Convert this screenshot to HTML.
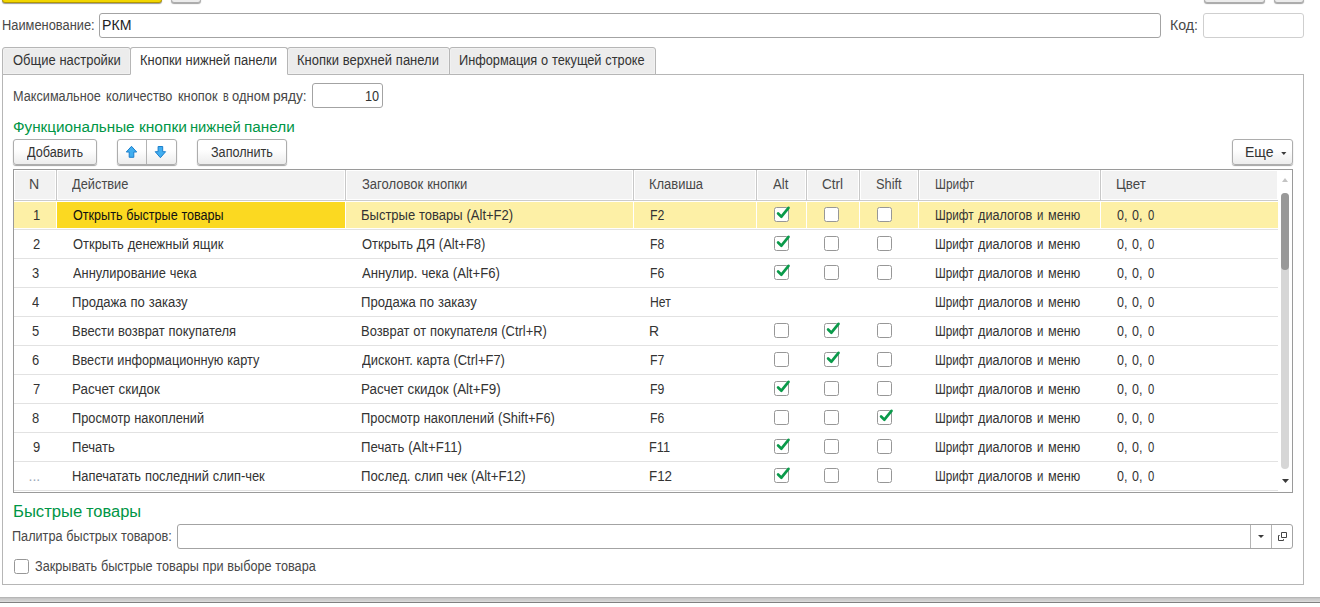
<!DOCTYPE html>
<html lang="ru"><head><meta charset="utf-8"><title>РКМ</title>
<style>
*{box-sizing:border-box;margin:0;padding:0}
html,body{width:1320px;height:607px;overflow:hidden;background:#fff}
body{position:relative;font-family:"Liberation Sans",Arial,sans-serif;font-size:14px;color:#333}
.a{position:absolute}
.t{position:absolute;z-index:3;white-space:nowrap;transform-origin:0 0;display:block}
.inp{position:absolute;border:1px solid #a3a3a3;border-radius:3px;background:#fff}
.btn{position:absolute;border:1px solid #adadad;border-radius:3px;background:linear-gradient(#fff 40%,#ececec);box-shadow:0 1px 1px rgba(0,0,0,.36)}
.tab{position:absolute;top:47px;height:28px;border:1px solid #b6b6b6;background:#ececec;box-shadow:inset 0 0 0 1px #f1f1f1;border-radius:3px 3px 0 0}
.tab.act{background:#fff;box-shadow:none;border-bottom:1px solid #fff;z-index:2}
.panel{position:absolute;left:2px;top:74px;width:1302px;height:511px;border:1px solid #b6b6b6;background:#fff}
.tbl{position:absolute;left:13px;top:169px;width:1280px;height:324px;border:1px solid #9a9a9a;background:#fff}
.hc{position:absolute;top:171px;height:28px;background:#f2f2f2}
.hs{position:absolute;z-index:1;top:170px;height:31px;width:1px;background:#c8c8c8}
.rl{position:absolute;left:14px;width:1264px;height:1px;background:#e2e2e2}
.cb{position:absolute;width:15px;height:15px;border:1px solid #979797;border-radius:2.5px;background:#fff;display:block}
.ck{position:absolute;left:-1px;top:-3px;overflow:visible}
.ss{position:absolute;top:202px;height:26px;width:1px;background:#fff}
</style></head><body>
<!-- top cut-off buttons -->
<div class="a" style="left:2px;top:-20px;width:160px;height:23px;background:#f2d600;border:1px solid #b39800;border-radius:3px;box-shadow:0 1px 1px rgba(0,0,0,.4)"></div>
<div class="btn" style="left:171px;top:-20px;width:30px;height:23px;background:#ececec"></div>
<div class="btn" style="left:1204px;top:-20px;width:61px;height:23px;background:#ececec"></div>
<div class="btn" style="left:1274px;top:-20px;width:30px;height:23px;background:#ececec"></div>

<div class="inp" style="left:99px;top:13px;width:1062px;height:25px"></div>
<div class="inp" style="left:1203px;top:13px;width:101px;height:25px;border-color:#cfcfcf"></div>

<div class="panel"></div>
<div class="tab" style="left:2px;width:129px"></div>
<div class="tab" style="left:287px;width:163px"></div>
<div class="tab" style="left:449px;width:207px"></div>
<div class="tab act" style="left:130px;width:158px"></div>

<div class="inp" style="left:312px;top:83px;width:71px;height:25px"></div>

<div class="btn" style="left:13px;top:139px;width:84px;height:26px"></div>
<div class="btn" style="left:117px;top:139px;width:60px;height:26px">
<div class="a" style="left:28px;top:0;width:1px;height:24px;background:#b3b3b3"></div>
<svg class="a" style="left:6px;top:5px" width="14" height="14" viewBox="0 0 14 14"><path d="M7.5 1.3 L12.7 7 H9.8 V12.3 H5.2 V7 H2.3 Z" fill="#41aef0" stroke="#1c7fcc" stroke-width="1" stroke-linejoin="miter"/></svg>
<svg class="a" style="left:35px;top:5px" width="14" height="14" viewBox="0 0 14 14"><path d="M7.4 12.7 L12.6 6.7 H9.7 V1.5 H5.1 V6.7 H2.2 Z" fill="#41aef0" stroke="#1c7fcc" stroke-width="1" stroke-linejoin="miter"/></svg>
</div>
<div class="btn" style="left:197px;top:139px;width:90px;height:26px"></div>
<div class="btn" style="left:1232px;top:139px;width:61px;height:26px"><svg class="a" style="left:48px;top:12px" width="6" height="3" viewBox="0 0 6 3"><path d="M0.2 0H5.4L2.8 2.9Z" fill="#3a3a3a"/></svg></div>

<div class="tbl"></div>
<!-- header cells -->
<div class="hc" style="left:15px;width:40px"></div>
<div class="hc" style="left:58px;width:286px"></div>
<div class="hc" style="left:347px;width:285px"></div>
<div class="hc" style="left:635px;width:120px"></div>
<div class="hc" style="left:758px;width:47px"></div>
<div class="hc" style="left:808px;width:50px"></div>
<div class="hc" style="left:861px;width:56px"></div>
<div class="hc" style="left:920px;width:179px"></div>
<div class="hc" style="left:1102px;width:175px"></div>
<div class="hs" style="left:56px"></div><div class="hs" style="left:345px"></div><div class="hs" style="left:633px"></div><div class="hs" style="left:756px"></div><div class="hs" style="left:806px"></div><div class="hs" style="left:859px"></div><div class="hs" style="left:918px"></div><div class="hs" style="left:1100px"></div>
<div class="a" style="left:14px;top:200px;width:1264px;height:1px;background:#cbcbcb"></div>
<!-- selected row -->
<div class="a" style="left:14px;top:202px;width:1264px;height:26px;background:#fdf0a6"></div>
<div class="a" style="left:57px;top:202px;width:288px;height:26px;background:#fbd921"></div>
<div class="ss" style="left:56px"></div><div class="ss" style="left:345px"></div><div class="ss" style="left:633px"></div><div class="ss" style="left:756px"></div><div class="ss" style="left:806px"></div><div class="ss" style="left:859px"></div><div class="ss" style="left:918px"></div><div class="ss" style="left:1100px"></div>
<div class="rl" style="top:229px"></div>
<div class="rl" style="top:258px"></div>
<div class="rl" style="top:287px"></div>
<div class="rl" style="top:316px"></div>
<div class="rl" style="top:345px"></div>
<div class="rl" style="top:374px"></div>
<div class="rl" style="top:403px"></div>
<div class="rl" style="top:432px"></div>
<div class="rl" style="top:461px"></div>
<div class="rl" style="top:490px"></div>
<span class="cb" style="left:774px;top:207px"><svg class="ck" viewBox="0 0 18 18" width="18" height="18"><path d="M4.1 8.5 L7.4 11.7 L14.5 2.9" fill="none" stroke="#0a9a4a" stroke-width="2.7" stroke-linecap="round" stroke-linejoin="round"/></svg></span>
<span class="cb" style="left:824px;top:207px"></span>
<span class="cb" style="left:877px;top:207px"></span>
<span class="cb" style="left:774px;top:236px"><svg class="ck" viewBox="0 0 18 18" width="18" height="18"><path d="M4.1 8.5 L7.4 11.7 L14.5 2.9" fill="none" stroke="#0a9a4a" stroke-width="2.7" stroke-linecap="round" stroke-linejoin="round"/></svg></span>
<span class="cb" style="left:824px;top:236px"></span>
<span class="cb" style="left:877px;top:236px"></span>
<span class="cb" style="left:774px;top:265px"><svg class="ck" viewBox="0 0 18 18" width="18" height="18"><path d="M4.1 8.5 L7.4 11.7 L14.5 2.9" fill="none" stroke="#0a9a4a" stroke-width="2.7" stroke-linecap="round" stroke-linejoin="round"/></svg></span>
<span class="cb" style="left:824px;top:265px"></span>
<span class="cb" style="left:877px;top:265px"></span>
<span class="cb" style="left:774px;top:323px"></span>
<span class="cb" style="left:824px;top:323px"><svg class="ck" viewBox="0 0 18 18" width="18" height="18"><path d="M4.1 8.5 L7.4 11.7 L14.5 2.9" fill="none" stroke="#0a9a4a" stroke-width="2.7" stroke-linecap="round" stroke-linejoin="round"/></svg></span>
<span class="cb" style="left:877px;top:323px"></span>
<span class="cb" style="left:774px;top:352px"></span>
<span class="cb" style="left:824px;top:352px"><svg class="ck" viewBox="0 0 18 18" width="18" height="18"><path d="M4.1 8.5 L7.4 11.7 L14.5 2.9" fill="none" stroke="#0a9a4a" stroke-width="2.7" stroke-linecap="round" stroke-linejoin="round"/></svg></span>
<span class="cb" style="left:877px;top:352px"></span>
<span class="cb" style="left:774px;top:381px"><svg class="ck" viewBox="0 0 18 18" width="18" height="18"><path d="M4.1 8.5 L7.4 11.7 L14.5 2.9" fill="none" stroke="#0a9a4a" stroke-width="2.7" stroke-linecap="round" stroke-linejoin="round"/></svg></span>
<span class="cb" style="left:824px;top:381px"></span>
<span class="cb" style="left:877px;top:381px"></span>
<span class="cb" style="left:774px;top:410px"></span>
<span class="cb" style="left:824px;top:410px"></span>
<span class="cb" style="left:877px;top:410px"><svg class="ck" viewBox="0 0 18 18" width="18" height="18"><path d="M4.1 8.5 L7.4 11.7 L14.5 2.9" fill="none" stroke="#0a9a4a" stroke-width="2.7" stroke-linecap="round" stroke-linejoin="round"/></svg></span>
<span class="cb" style="left:774px;top:439px"><svg class="ck" viewBox="0 0 18 18" width="18" height="18"><path d="M4.1 8.5 L7.4 11.7 L14.5 2.9" fill="none" stroke="#0a9a4a" stroke-width="2.7" stroke-linecap="round" stroke-linejoin="round"/></svg></span>
<span class="cb" style="left:824px;top:439px"></span>
<span class="cb" style="left:877px;top:439px"></span>
<span class="cb" style="left:774px;top:468px"><svg class="ck" viewBox="0 0 18 18" width="18" height="18"><path d="M4.1 8.5 L7.4 11.7 L14.5 2.9" fill="none" stroke="#0a9a4a" stroke-width="2.7" stroke-linecap="round" stroke-linejoin="round"/></svg></span>
<span class="cb" style="left:824px;top:468px"></span>
<span class="cb" style="left:877px;top:468px"></span>
<!-- scrollbar -->
<svg class="a" style="left:1282px;top:178px" width="6" height="4" viewBox="0 0 6 4"><path d="M0 4H6L3 0Z" fill="#c4c4c4"/></svg>
<div class="a" style="left:1281px;top:193px;width:8px;height:276px;border-radius:4px;background:#d6d6d6"></div>
<div class="a" style="left:1281px;top:193px;width:8px;height:77px;border-radius:4px;background:#999"></div>
<svg class="a" style="left:1282px;top:479px" width="7" height="4" viewBox="0 0 7 4"><path d="M0 0H7L3.5 4Z" fill="#3a3a3a"/></svg>

<div class="inp" style="left:177px;top:524px;width:1116px;height:25px"></div>
<div class="a" style="left:1250px;top:525px;width:1px;height:23px;background:#b4b4b4"></div>
<div class="a" style="left:1271px;top:525px;width:1px;height:23px;background:#b4b4b4"></div>
<svg class="a" style="left:1258px;top:535px" width="6" height="3" viewBox="0 0 6 3"><path d="M0 0H6L3 3Z" fill="#3a3a3a"/></svg>
<svg class="a" style="left:1277px;top:531px" width="11" height="11" viewBox="0 0 11 11"><path d="M4.5 1.5H9.5V6.5H4.5Z M2.7 4.5H1.5V9.5H6.5V8.2" fill="none" stroke="#444" stroke-width="1"/></svg>
<span class="cb" style="left:14px;top:559px"></span>

<span class="t" style="left:1.57px;top:16.90px;font-size:14px;line-height:16px;color:#484848;transform:scaleX(0.9179)">Наименование:</span>
<span class="t" style="left:102.27px;top:17.00px;font-size:14px;line-height:16px;color:#222;transform:scaleX(1.0082)">РКМ</span>
<span class="t" style="left:1170.27px;top:17.00px;font-size:14px;line-height:16px;color:#484848;transform:scaleX(1.0131)">Код:</span>
<span class="t" style="left:12.67px;top:52.00px;font-size:14px;line-height:16px;color:#333;word-spacing:0.25px;transform:scaleX(0.9252)">Общие настройки</span>
<span class="t" style="left:140.46px;top:52.00px;font-size:14px;line-height:16px;color:#333;word-spacing:0.25px;transform:scaleX(0.9245)">Кнопки нижней панели</span>
<span class="t" style="left:297.26px;top:52.00px;font-size:14px;line-height:16px;color:#333;word-spacing:0.25px;transform:scaleX(0.9280)">Кнопки верхней панели</span>
<span class="t" style="left:459.28px;top:52.00px;font-size:14px;line-height:16px;color:#333;word-spacing:0.25px;transform:scaleX(0.9131)">Информация о текущей строке</span>
<span class="t" style="left:13.24px;top:87.75px;font-size:14px;line-height:16px;color:#484848;transform:scaleX(0.9061)">Максимальное</span>
<span class="t" style="left:106.03px;top:87.75px;font-size:14px;line-height:16px;color:#484848;transform:scaleX(0.9050)">количество</span>
<span class="t" style="left:177.62px;top:87.75px;font-size:14px;line-height:16px;color:#484848;transform:scaleX(0.9153)">кнопок</span>
<span class="t" style="left:222.50px;top:87.75px;font-size:14px;line-height:16px;color:#484848;transform:scaleX(0.7653)">в</span>
<span class="t" style="left:231.93px;top:87.75px;font-size:14px;line-height:16px;color:#484848;transform:scaleX(0.9269)">одном</span>
<span class="t" style="left:273.36px;top:87.75px;font-size:14px;line-height:16px;color:#484848;transform:scaleX(0.9825)">ряду:</span>
<span class="t" style="left:365.35px;top:87.75px;font-size:14px;line-height:16px;color:#333;transform:scaleX(0.9071)">10</span>
<span class="t" style="left:13.41px;top:117.50px;font-size:15.5px;line-height:17.5px;color:#009646;transform:scaleX(0.9831)">Функциональные</span>
<span class="t" style="left:138.64px;top:117.50px;font-size:15.5px;line-height:17.5px;color:#009646;transform:scaleX(1.0016)">кнопки</span>
<span class="t" style="left:189.82px;top:117.50px;font-size:15.5px;line-height:17.5px;color:#009646;transform:scaleX(0.9492)">нижней</span>
<span class="t" style="left:244.28px;top:117.50px;font-size:15.5px;line-height:17.5px;color:#009646;transform:scaleX(0.9876)">панели</span>
<span class="t" style="left:26.94px;top:144.00px;font-size:14px;line-height:16px;color:#333;transform:scaleX(0.9061)">Добавить</span>
<span class="t" style="left:211.06px;top:144.00px;font-size:14px;line-height:16px;color:#333;transform:scaleX(0.9012)">Заполнить</span>
<span class="t" style="left:1245.28px;top:144.00px;font-size:14px;line-height:16px;color:#333;transform:scaleX(1.0022)">Еще</span>
<span class="t" style="left:29.47px;top:176.00px;font-size:14px;line-height:16px;color:#484848;transform:scaleX(1.0077)">N</span>
<span class="t" style="left:72.44px;top:176.00px;font-size:14px;line-height:16px;color:#484848;transform:scaleX(0.9165)">Действие</span>
<span class="t" style="left:362.24px;top:176.00px;font-size:14px;line-height:16px;color:#484848;word-spacing:0.25px;transform:scaleX(0.9311)">Заголовок кнопки</span>
<span class="t" style="left:649.46px;top:176.00px;font-size:14px;line-height:16px;color:#484848;transform:scaleX(0.9256)">Клавиша</span>
<span class="t" style="left:773.00px;top:176.00px;font-size:14px;line-height:16px;color:#484848;transform:scaleX(0.9390)">Alt</span>
<span class="t" style="left:822.32px;top:176.00px;font-size:14px;line-height:16px;color:#484848;transform:scaleX(0.9673)">Ctrl</span>
<span class="t" style="left:875.67px;top:176.00px;font-size:14px;line-height:16px;color:#484848;transform:scaleX(0.9158)">Shift</span>
<span class="t" style="left:934.55px;top:176.00px;font-size:14px;line-height:16px;color:#484848;transform:scaleX(0.8486)">Шрифт</span>
<span class="t" style="left:1116.44px;top:176.00px;font-size:14px;line-height:16px;color:#484848;transform:scaleX(0.9491)">Цвет</span>
<span class="t" style="left:32.50px;top:207.00px;font-size:14px;line-height:16px;color:#333;transform:scaleX(0.9250)">1</span>
<span class="t" style="left:72.68px;top:207.00px;font-size:14px;line-height:16px;color:#111;word-spacing:0.25px;transform:scaleX(0.9003)">Открыть быстрые товары</span>
<span class="t" style="left:361.21px;top:207.00px;font-size:14px;line-height:16px;color:#333;word-spacing:0.25px;transform:scaleX(0.9291)">Быстрые товары (Alt+F2)</span>
<span class="t" style="left:649.51px;top:207.00px;font-size:14px;line-height:16px;color:#333;transform:scaleX(0.8799)">F2</span>
<span class="t" style="left:935.01px;top:207.00px;font-size:14px;line-height:16px;color:#333;transform:scaleX(0.8374)">Шрифт</span>
<span class="t" style="left:978.02px;top:207.00px;font-size:14px;line-height:16px;color:#333;transform:scaleX(0.9051)">диалогов</span>
<span class="t" style="left:1036.85px;top:207.00px;font-size:14px;line-height:16px;color:#333;transform:scaleX(0.8163)">и</span>
<span class="t" style="left:1048.06px;top:207.00px;font-size:14px;line-height:16px;color:#333;transform:scaleX(0.9064)">меню</span>
<span class="t" style="left:1117.35px;top:207.00px;font-size:14px;line-height:16px;color:#333;transform:scaleX(0.8916)">0,</span>
<span class="t" style="left:1132.45px;top:207.00px;font-size:14px;line-height:16px;color:#333;transform:scaleX(0.8916)">0,</span>
<span class="t" style="left:1147.60px;top:207.00px;font-size:14px;line-height:16px;color:#333;transform:scaleX(0.8036)">0</span>
<span class="t" style="left:32.56px;top:236.00px;font-size:14px;line-height:16px;color:#333;transform:scaleX(0.9250)">2</span>
<span class="t" style="left:72.67px;top:236.00px;font-size:14px;line-height:16px;color:#333;word-spacing:0.25px;transform:scaleX(0.9244)">Открыть денежный ящик</span>
<span class="t" style="left:361.67px;top:236.00px;font-size:14px;line-height:16px;color:#333;word-spacing:0.25px;transform:scaleX(0.9275)">Открыть ДЯ (Alt+F8)</span>
<span class="t" style="left:649.52px;top:236.00px;font-size:14px;line-height:16px;color:#333;transform:scaleX(0.8715)">F8</span>
<span class="t" style="left:935.01px;top:236.00px;font-size:14px;line-height:16px;color:#333;transform:scaleX(0.8374)">Шрифт</span>
<span class="t" style="left:978.02px;top:236.00px;font-size:14px;line-height:16px;color:#333;transform:scaleX(0.9051)">диалогов</span>
<span class="t" style="left:1036.85px;top:236.00px;font-size:14px;line-height:16px;color:#333;transform:scaleX(0.8163)">и</span>
<span class="t" style="left:1048.06px;top:236.00px;font-size:14px;line-height:16px;color:#333;transform:scaleX(0.9064)">меню</span>
<span class="t" style="left:1117.35px;top:236.00px;font-size:14px;line-height:16px;color:#333;transform:scaleX(0.8916)">0,</span>
<span class="t" style="left:1132.45px;top:236.00px;font-size:14px;line-height:16px;color:#333;transform:scaleX(0.8916)">0,</span>
<span class="t" style="left:1147.60px;top:236.00px;font-size:14px;line-height:16px;color:#333;transform:scaleX(0.8036)">0</span>
<span class="t" style="left:32.43px;top:265.00px;font-size:14px;line-height:16px;color:#333;transform:scaleX(0.9250)">3</span>
<span class="t" style="left:73.25px;top:265.00px;font-size:14px;line-height:16px;color:#333;word-spacing:0.25px;transform:scaleX(0.9158)">Аннулирование чека</span>
<span class="t" style="left:362.25px;top:265.00px;font-size:14px;line-height:16px;color:#333;word-spacing:0.25px;transform:scaleX(0.9382)">Аннулир. чека (Alt+F6)</span>
<span class="t" style="left:649.52px;top:265.00px;font-size:14px;line-height:16px;color:#333;transform:scaleX(0.8715)">F6</span>
<span class="t" style="left:935.01px;top:265.00px;font-size:14px;line-height:16px;color:#333;transform:scaleX(0.8374)">Шрифт</span>
<span class="t" style="left:978.02px;top:265.00px;font-size:14px;line-height:16px;color:#333;transform:scaleX(0.9051)">диалогов</span>
<span class="t" style="left:1036.85px;top:265.00px;font-size:14px;line-height:16px;color:#333;transform:scaleX(0.8163)">и</span>
<span class="t" style="left:1048.06px;top:265.00px;font-size:14px;line-height:16px;color:#333;transform:scaleX(0.9064)">меню</span>
<span class="t" style="left:1117.35px;top:265.00px;font-size:14px;line-height:16px;color:#333;transform:scaleX(0.8916)">0,</span>
<span class="t" style="left:1132.45px;top:265.00px;font-size:14px;line-height:16px;color:#333;transform:scaleX(0.8916)">0,</span>
<span class="t" style="left:1147.60px;top:265.00px;font-size:14px;line-height:16px;color:#333;transform:scaleX(0.8036)">0</span>
<span class="t" style="left:32.30px;top:294.00px;font-size:14px;line-height:16px;color:#333;transform:scaleX(0.9250)">4</span>
<span class="t" style="left:72.20px;top:294.00px;font-size:14px;line-height:16px;color:#333;word-spacing:0.25px;transform:scaleX(0.9346)">Продажа по заказу</span>
<span class="t" style="left:361.20px;top:294.00px;font-size:14px;line-height:16px;color:#333;word-spacing:0.25px;transform:scaleX(0.9367)">Продажа по заказу</span>
<span class="t" style="left:649.53px;top:294.00px;font-size:14px;line-height:16px;color:#333;transform:scaleX(0.8678)">Нет</span>
<span class="t" style="left:935.01px;top:294.00px;font-size:14px;line-height:16px;color:#333;transform:scaleX(0.8374)">Шрифт</span>
<span class="t" style="left:978.02px;top:294.00px;font-size:14px;line-height:16px;color:#333;transform:scaleX(0.9051)">диалогов</span>
<span class="t" style="left:1036.85px;top:294.00px;font-size:14px;line-height:16px;color:#333;transform:scaleX(0.8163)">и</span>
<span class="t" style="left:1048.06px;top:294.00px;font-size:14px;line-height:16px;color:#333;transform:scaleX(0.9064)">меню</span>
<span class="t" style="left:1117.35px;top:294.00px;font-size:14px;line-height:16px;color:#333;transform:scaleX(0.8916)">0,</span>
<span class="t" style="left:1132.45px;top:294.00px;font-size:14px;line-height:16px;color:#333;transform:scaleX(0.8916)">0,</span>
<span class="t" style="left:1147.60px;top:294.00px;font-size:14px;line-height:16px;color:#333;transform:scaleX(0.8036)">0</span>
<span class="t" style="left:32.43px;top:323.00px;font-size:14px;line-height:16px;color:#333;transform:scaleX(0.9250)">5</span>
<span class="t" style="left:72.21px;top:323.00px;font-size:14px;line-height:16px;color:#333;word-spacing:0.25px;transform:scaleX(0.9252)">Ввести возврат покупателя</span>
<span class="t" style="left:361.22px;top:323.00px;font-size:14px;line-height:16px;color:#333;word-spacing:0.25px;transform:scaleX(0.9237)">Возврат от покупателя (Ctrl+R)</span>
<span class="t" style="left:649.39px;top:323.00px;font-size:14px;line-height:16px;color:#333;transform:scaleX(0.9904)">R</span>
<span class="t" style="left:935.01px;top:323.00px;font-size:14px;line-height:16px;color:#333;transform:scaleX(0.8374)">Шрифт</span>
<span class="t" style="left:978.02px;top:323.00px;font-size:14px;line-height:16px;color:#333;transform:scaleX(0.9051)">диалогов</span>
<span class="t" style="left:1036.85px;top:323.00px;font-size:14px;line-height:16px;color:#333;transform:scaleX(0.8163)">и</span>
<span class="t" style="left:1048.06px;top:323.00px;font-size:14px;line-height:16px;color:#333;transform:scaleX(0.9064)">меню</span>
<span class="t" style="left:1117.35px;top:323.00px;font-size:14px;line-height:16px;color:#333;transform:scaleX(0.8916)">0,</span>
<span class="t" style="left:1132.45px;top:323.00px;font-size:14px;line-height:16px;color:#333;transform:scaleX(0.8916)">0,</span>
<span class="t" style="left:1147.60px;top:323.00px;font-size:14px;line-height:16px;color:#333;transform:scaleX(0.8036)">0</span>
<span class="t" style="left:32.43px;top:352.00px;font-size:14px;line-height:16px;color:#333;transform:scaleX(0.9250)">6</span>
<span class="t" style="left:72.23px;top:352.00px;font-size:14px;line-height:16px;color:#333;word-spacing:0.25px;transform:scaleX(0.9099)">Ввести информационную карту</span>
<span class="t" style="left:362.19px;top:352.00px;font-size:14px;line-height:16px;color:#333;word-spacing:0.25px;transform:scaleX(0.9250)">Дисконт. карта (Ctrl+F7)</span>
<span class="t" style="left:649.51px;top:352.00px;font-size:14px;line-height:16px;color:#333;transform:scaleX(0.8799)">F7</span>
<span class="t" style="left:935.01px;top:352.00px;font-size:14px;line-height:16px;color:#333;transform:scaleX(0.8374)">Шрифт</span>
<span class="t" style="left:978.02px;top:352.00px;font-size:14px;line-height:16px;color:#333;transform:scaleX(0.9051)">диалогов</span>
<span class="t" style="left:1036.85px;top:352.00px;font-size:14px;line-height:16px;color:#333;transform:scaleX(0.8163)">и</span>
<span class="t" style="left:1048.06px;top:352.00px;font-size:14px;line-height:16px;color:#333;transform:scaleX(0.9064)">меню</span>
<span class="t" style="left:1117.35px;top:352.00px;font-size:14px;line-height:16px;color:#333;transform:scaleX(0.8916)">0,</span>
<span class="t" style="left:1132.45px;top:352.00px;font-size:14px;line-height:16px;color:#333;transform:scaleX(0.8916)">0,</span>
<span class="t" style="left:1147.60px;top:352.00px;font-size:14px;line-height:16px;color:#333;transform:scaleX(0.8036)">0</span>
<span class="t" style="left:32.56px;top:381.00px;font-size:14px;line-height:16px;color:#333;transform:scaleX(0.9250)">7</span>
<span class="t" style="left:72.18px;top:381.00px;font-size:14px;line-height:16px;color:#333;word-spacing:0.25px;transform:scaleX(0.9573)">Расчет скидок</span>
<span class="t" style="left:361.18px;top:381.00px;font-size:14px;line-height:16px;color:#333;word-spacing:0.25px;transform:scaleX(0.9566)">Расчет скидок (Alt+F9)</span>
<span class="t" style="left:649.52px;top:381.00px;font-size:14px;line-height:16px;color:#333;transform:scaleX(0.8757)">F9</span>
<span class="t" style="left:935.01px;top:381.00px;font-size:14px;line-height:16px;color:#333;transform:scaleX(0.8374)">Шрифт</span>
<span class="t" style="left:978.02px;top:381.00px;font-size:14px;line-height:16px;color:#333;transform:scaleX(0.9051)">диалогов</span>
<span class="t" style="left:1036.85px;top:381.00px;font-size:14px;line-height:16px;color:#333;transform:scaleX(0.8163)">и</span>
<span class="t" style="left:1048.06px;top:381.00px;font-size:14px;line-height:16px;color:#333;transform:scaleX(0.9064)">меню</span>
<span class="t" style="left:1117.35px;top:381.00px;font-size:14px;line-height:16px;color:#333;transform:scaleX(0.8916)">0,</span>
<span class="t" style="left:1132.45px;top:381.00px;font-size:14px;line-height:16px;color:#333;transform:scaleX(0.8916)">0,</span>
<span class="t" style="left:1147.60px;top:381.00px;font-size:14px;line-height:16px;color:#333;transform:scaleX(0.8036)">0</span>
<span class="t" style="left:32.43px;top:410.00px;font-size:14px;line-height:16px;color:#333;transform:scaleX(0.9250)">8</span>
<span class="t" style="left:72.23px;top:410.00px;font-size:14px;line-height:16px;color:#333;word-spacing:0.25px;transform:scaleX(0.9141)">Просмотр накоплений</span>
<span class="t" style="left:361.22px;top:410.00px;font-size:14px;line-height:16px;color:#333;word-spacing:0.25px;transform:scaleX(0.9207)">Просмотр накоплений (Shift+F6)</span>
<span class="t" style="left:649.52px;top:410.00px;font-size:14px;line-height:16px;color:#333;transform:scaleX(0.8715)">F6</span>
<span class="t" style="left:935.01px;top:410.00px;font-size:14px;line-height:16px;color:#333;transform:scaleX(0.8374)">Шрифт</span>
<span class="t" style="left:978.02px;top:410.00px;font-size:14px;line-height:16px;color:#333;transform:scaleX(0.9051)">диалогов</span>
<span class="t" style="left:1036.85px;top:410.00px;font-size:14px;line-height:16px;color:#333;transform:scaleX(0.8163)">и</span>
<span class="t" style="left:1048.06px;top:410.00px;font-size:14px;line-height:16px;color:#333;transform:scaleX(0.9064)">меню</span>
<span class="t" style="left:1117.35px;top:410.00px;font-size:14px;line-height:16px;color:#333;transform:scaleX(0.8916)">0,</span>
<span class="t" style="left:1132.45px;top:410.00px;font-size:14px;line-height:16px;color:#333;transform:scaleX(0.8916)">0,</span>
<span class="t" style="left:1147.60px;top:410.00px;font-size:14px;line-height:16px;color:#333;transform:scaleX(0.8036)">0</span>
<span class="t" style="left:32.50px;top:439.00px;font-size:14px;line-height:16px;color:#333;transform:scaleX(0.9250)">9</span>
<span class="t" style="left:72.20px;top:439.00px;font-size:14px;line-height:16px;color:#333;transform:scaleX(0.9339)">Печать</span>
<span class="t" style="left:361.19px;top:439.00px;font-size:14px;line-height:16px;color:#333;word-spacing:0.25px;transform:scaleX(0.9438)">Печать (Alt+F11)</span>
<span class="t" style="left:649.48px;top:439.00px;font-size:14px;line-height:16px;color:#333;transform:scaleX(0.9133)">F11</span>
<span class="t" style="left:935.01px;top:439.00px;font-size:14px;line-height:16px;color:#333;transform:scaleX(0.8374)">Шрифт</span>
<span class="t" style="left:978.02px;top:439.00px;font-size:14px;line-height:16px;color:#333;transform:scaleX(0.9051)">диалогов</span>
<span class="t" style="left:1036.85px;top:439.00px;font-size:14px;line-height:16px;color:#333;transform:scaleX(0.8163)">и</span>
<span class="t" style="left:1048.06px;top:439.00px;font-size:14px;line-height:16px;color:#333;transform:scaleX(0.9064)">меню</span>
<span class="t" style="left:1117.35px;top:439.00px;font-size:14px;line-height:16px;color:#333;transform:scaleX(0.8916)">0,</span>
<span class="t" style="left:1132.45px;top:439.00px;font-size:14px;line-height:16px;color:#333;transform:scaleX(0.8916)">0,</span>
<span class="t" style="left:1147.60px;top:439.00px;font-size:14px;line-height:16px;color:#333;transform:scaleX(0.8036)">0</span>
<span class="t" style="left:28.54px;top:468.00px;font-size:14px;line-height:16px;color:#9aa8b8;transform:scaleX(1.0000)">...</span>
<span class="t" style="left:72.22px;top:468.00px;font-size:14px;line-height:16px;color:#333;word-spacing:0.25px;transform:scaleX(0.9210)">Напечатать последний слип-чек</span>
<span class="t" style="left:361.19px;top:468.00px;font-size:14px;line-height:16px;color:#333;word-spacing:0.25px;transform:scaleX(0.9422)">Послед. слип чек (Alt+F12)</span>
<span class="t" style="left:649.43px;top:468.00px;font-size:14px;line-height:16px;color:#333;transform:scaleX(0.9546)">F12</span>
<span class="t" style="left:935.01px;top:468.00px;font-size:14px;line-height:16px;color:#333;transform:scaleX(0.8374)">Шрифт</span>
<span class="t" style="left:978.02px;top:468.00px;font-size:14px;line-height:16px;color:#333;transform:scaleX(0.9051)">диалогов</span>
<span class="t" style="left:1036.85px;top:468.00px;font-size:14px;line-height:16px;color:#333;transform:scaleX(0.8163)">и</span>
<span class="t" style="left:1048.06px;top:468.00px;font-size:14px;line-height:16px;color:#333;transform:scaleX(0.9064)">меню</span>
<span class="t" style="left:1117.35px;top:468.00px;font-size:14px;line-height:16px;color:#333;transform:scaleX(0.8916)">0,</span>
<span class="t" style="left:1132.45px;top:468.00px;font-size:14px;line-height:16px;color:#333;transform:scaleX(0.8916)">0,</span>
<span class="t" style="left:1147.60px;top:468.00px;font-size:14px;line-height:16px;color:#333;transform:scaleX(0.8036)">0</span>
<span class="t" style="left:12.62px;top:503.25px;font-size:16px;line-height:18px;color:#009646;transform:scaleX(1.0396)">Быстрые</span>
<span class="t" style="left:86.30px;top:503.25px;font-size:16px;line-height:18px;color:#009646;transform:scaleX(1.0283)">товары</span>
<span class="t" style="left:12.49px;top:528.25px;font-size:14px;line-height:16px;color:#484848;word-spacing:0.25px;transform:scaleX(0.9050)">Палитра быстрых товаров:</span>
<span class="t" style="left:35.06px;top:558.10px;font-size:14px;line-height:16px;color:#484848;word-spacing:0.25px;transform:scaleX(0.9050)">Закрывать быстрые товары при выборе товара</span>

<!-- bottom bar -->
<div class="a" style="left:0;top:597px;width:1320px;height:6px;background:linear-gradient(#b6b6b6 0px,#b6b6b6 1px,#c6c6c6 1px,#c6c6c6 2px,#cdcdcd 2px,#cdcdcd 3px,#d0d0d0 3px,#d0d0d0 4px,#dadada 4px,#dadada 5px,#808080 5px,#808080 6px)"></div>
</body></html>
